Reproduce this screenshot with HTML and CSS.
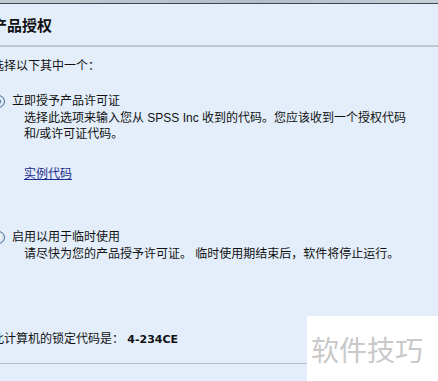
FILE: index.html
```html
<!DOCTYPE html>
<html>
	<head>
		<meta charset="utf-8">
		<title>产品授权</title>
		<link rel="stylesheet" href="styles.css">
	</head>
	<body>
		<div class="topbar"></div>
		<div class="header">
			<h1 class="title">产品授权</h1>
		</div>
		<div class="content">
			<p class="prompt">选择以下其中一个：</p>

			<div class="option first">
				<label class="choice">
					<span class="radio checked"></span>
					<span>立即授予产品许可证</span>
				</label>
				<p class="desc">选择此选项来输入您从 SPSS Inc 收到的代码。您应该收到一个授权代码<br>和/或许可证代码。</p>
				<a class="link" href="#">实例代码</a>
			</div>

			<div class="option second">
				<label class="choice">
					<span class="radio"></span>
					<span>启用以用于临时使用</span>
				</label>
				<p class="desc">请尽快为您的产品授予许可证。 临时使用期结束后，软件将停止运行。</p>
			</div>

			<p class="lock">此计算机的锁定代码是： <b class="code">4-234CE</b></p>
		</div>
		<div class="footer-line"></div>

		<!-- 水印 -->
		<div class="watermark">软件技巧</div>
	</body>
</html>
```

FILE: styles.css
```css
* {
	margin: 0;
	padding: 0;
}

body {
	width: 438px;
	height: 381px;
	overflow: hidden;
	position: relative;
	background-color: #e3eefa;
	color: #111111;
	font-family: "Liberation Sans", "Noto Sans CJK SC", sans-serif;
	font-size: 12px;
	line-height: 16px;
}

.topbar {
	height: 3px;
	background: linear-gradient(to right, #c4cad2, #b4bcc6 60%, #c8ced6);
	border-bottom: 1px solid #3e4852;
}

.header {
	height: 41px;
	border-bottom: 2px solid #c2c6cc;
	padding-left: 0;
	margin-left: -8px;
}

.header .title {
	font-size: 15px;
	line-height: 41px;
	font-weight: bold;
	font-family: "Noto Sans CJK SC", sans-serif;
}

.content {
	margin-left: -8px;
	padding-top: 11px;
	display: flex;
	flex-direction: column;
}

.option {
	display: flex;
	flex-direction: column;
}

.option.first {
	margin-top: 19px;
}

.option.second {
	margin-top: 47px;
}

.choice {
	display: flex;
	align-items: center;
	gap: 7px;
}

.radio {
	width: 11px;
	height: 11px;
	border: 1px solid #3d6a9c;
	border-radius: 50%;
	background: radial-gradient(circle at 40% 40%, #ffffff, #d6dde6 80%);
	display: flex;
	align-items: center;
	justify-content: center;
}

.radio.checked::after {
	content: "";
	width: 5px;
	height: 5px;
	border-radius: 50%;
	background: radial-gradient(circle at 35% 35%, #6fb2f0, #1f5fae);
}

.desc {
	margin-left: 32px;
	margin-top: 1px;
}

.link {
	margin-left: 32px;
	margin-top: 24px;
	align-self: flex-start;
	color: #1b2a8e;
	text-decoration: underline;
}

.lock {
	margin-top: 69px;
}

.lock .code {
	font-family: "DejaVu Sans", sans-serif;
	font-size: 11px;
}

.footer-line {
	margin-top: 15px;
	border-top: 1px solid #b4bcc6;
}

.watermark {
	position: absolute;
	left: 307px;
	top: 316px;
	width: 131px;
	height: 65px;
	background-color: #ffffff;
	color: #c9c9c9;
	font-family: "Noto Sans CJK SC", sans-serif;
	font-size: 28px;
	line-height: 28px;
	padding: 19px 0 0 4px;
	box-sizing: border-box;
}
```
